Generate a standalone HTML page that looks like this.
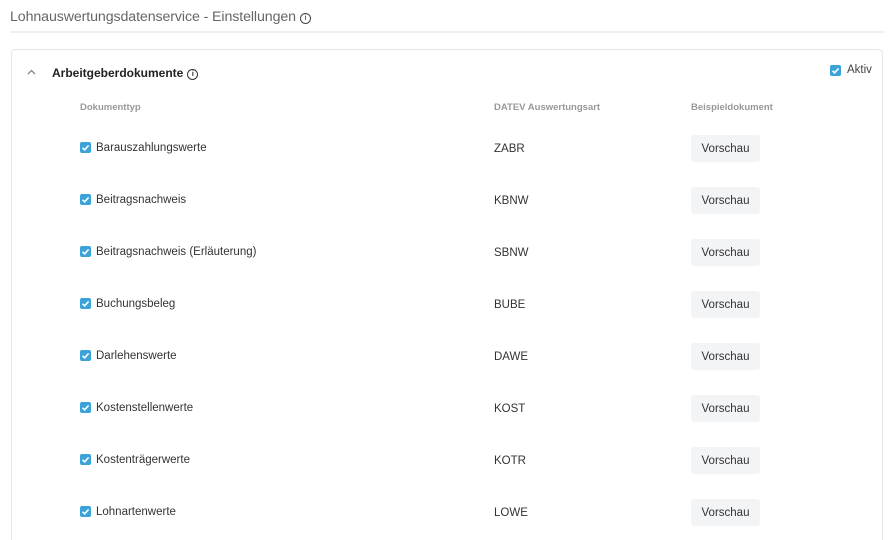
<!DOCTYPE html>
<html style="overflow:hidden;height:540px"><head><meta charset="utf-8"><style>
body{margin:0;width:890px;height:540px;background:#fff;font-family:"Liberation Sans",sans-serif;color:#333;position:relative;overflow:hidden}
.a{position:absolute;white-space:nowrap}
.title{left:10px;top:9px;font-size:14.2px;color:#666;letter-spacing:-0.1px}
.hr{left:10px;top:31px;width:875px;height:2px;background:#eef0f2}
.card{left:11px;top:49px;width:872px;height:491px;border:1px solid #e3e6ea;border-bottom:none;border-radius:4px 4px 0 0;box-sizing:border-box}
.cb{width:11px;height:11px;background:#3aa3d9;border-radius:2px}
.cb svg{display:block}
.hd{font-size:9.5px;color:#999;font-weight:bold;top:102px}
.t{font-size:11.5px;color:#333}
.btn{left:691px;width:69px;height:27px;background:#f3f4f6;border-radius:3px;font-size:11.5px;color:#333;text-align:center;line-height:29px}
.info{display:inline-block;width:9px;height:9px;border:1.2px solid #444;border-radius:50%;font-size:7px;line-height:9px;text-align:center;vertical-align:1px;font-weight:bold;margin-left:4px}
</style></head><body>
<div class="a title">Lohnauswertungsdatenservice - Einstellungen<span class="info">i</span></div>
<div class="a hr"></div>
<div class="a card"></div>
<svg class="a" style="left:27px;top:69px" width="9" height="6"><path d="M1 5L4.5 1.5L8 5" stroke="#888" stroke-width="1.3" fill="none"/></svg>
<div class="a" style="left:52px;top:66px;font-size:12px;font-weight:bold;color:#222">Arbeitgeberdokumente<span class="info" style="border-color:#333">i</span></div>
<div class="a cb" style="left:830px;top:65px"><svg width="11" height="11"><path d="M2.5 5.8L4.6 7.8L8.6 3.4" stroke="#fff" stroke-width="1.6" fill="none"/></svg></div>
<div class="a t" style="left:847px;top:64px;color:#444">Aktiv</div>
<div class="a hd" style="left:80px">Dokumenttyp</div>
<div class="a hd" style="left:494px">DATEV Auswertungsart</div>
<div class="a hd" style="left:691px">Beispieldokument</div>

<div class="a cb" style="left:80px;top:142px"><svg width="11" height="11"><path d="M2.5 5.8L4.6 7.8L8.6 3.4" stroke="#fff" stroke-width="1.6" fill="none"/></svg></div>
<div class="a t" style="left:96px;top:142px">Barauszahlungswerte</div>
<div class="a t" style="left:494px;top:143px">ZABR</div>
<div class="a btn" style="top:135px">Vorschau</div>

<div class="a cb" style="left:80px;top:194px"><svg width="11" height="11"><path d="M2.5 5.8L4.6 7.8L8.6 3.4" stroke="#fff" stroke-width="1.6" fill="none"/></svg></div>
<div class="a t" style="left:96px;top:194px">Beitragsnachweis</div>
<div class="a t" style="left:494px;top:195px">KBNW</div>
<div class="a btn" style="top:187px">Vorschau</div>

<div class="a cb" style="left:80px;top:246px"><svg width="11" height="11"><path d="M2.5 5.8L4.6 7.8L8.6 3.4" stroke="#fff" stroke-width="1.6" fill="none"/></svg></div>
<div class="a t" style="left:96px;top:246px">Beitragsnachweis (Erläuterung)</div>
<div class="a t" style="left:494px;top:247px">SBNW</div>
<div class="a btn" style="top:239px">Vorschau</div>

<div class="a cb" style="left:80px;top:298px"><svg width="11" height="11"><path d="M2.5 5.8L4.6 7.8L8.6 3.4" stroke="#fff" stroke-width="1.6" fill="none"/></svg></div>
<div class="a t" style="left:96px;top:298px">Buchungsbeleg</div>
<div class="a t" style="left:494px;top:299px">BUBE</div>
<div class="a btn" style="top:291px">Vorschau</div>

<div class="a cb" style="left:80px;top:350px"><svg width="11" height="11"><path d="M2.5 5.8L4.6 7.8L8.6 3.4" stroke="#fff" stroke-width="1.6" fill="none"/></svg></div>
<div class="a t" style="left:96px;top:350px">Darlehenswerte</div>
<div class="a t" style="left:494px;top:351px">DAWE</div>
<div class="a btn" style="top:343px">Vorschau</div>

<div class="a cb" style="left:80px;top:402px"><svg width="11" height="11"><path d="M2.5 5.8L4.6 7.8L8.6 3.4" stroke="#fff" stroke-width="1.6" fill="none"/></svg></div>
<div class="a t" style="left:96px;top:402px">Kostenstellenwerte</div>
<div class="a t" style="left:494px;top:403px">KOST</div>
<div class="a btn" style="top:395px">Vorschau</div>

<div class="a cb" style="left:80px;top:454px"><svg width="11" height="11"><path d="M2.5 5.8L4.6 7.8L8.6 3.4" stroke="#fff" stroke-width="1.6" fill="none"/></svg></div>
<div class="a t" style="left:96px;top:454px">Kostenträgerwerte</div>
<div class="a t" style="left:494px;top:455px">KOTR</div>
<div class="a btn" style="top:447px">Vorschau</div>

<div class="a cb" style="left:80px;top:506px"><svg width="11" height="11"><path d="M2.5 5.8L4.6 7.8L8.6 3.4" stroke="#fff" stroke-width="1.6" fill="none"/></svg></div>
<div class="a t" style="left:96px;top:506px">Lohnartenwerte</div>
<div class="a t" style="left:494px;top:507px">LOWE</div>
<div class="a btn" style="top:499px">Vorschau</div>
</body></html>
